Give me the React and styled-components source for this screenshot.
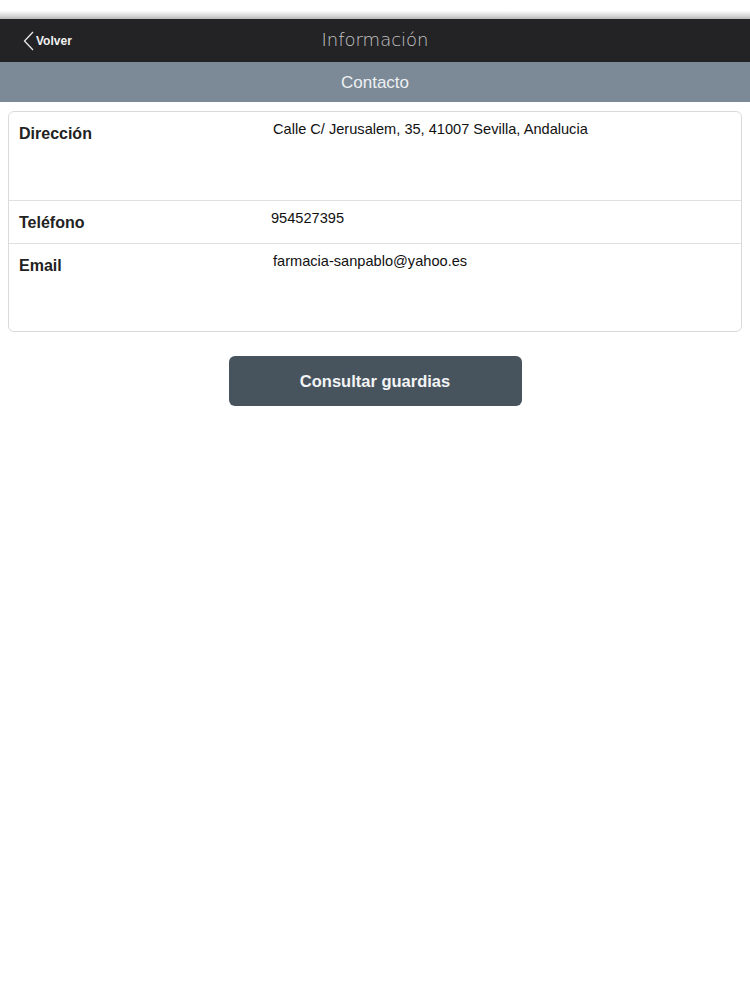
import React from "react";
import styled, { createGlobalStyle } from "styled-components";

const GlobalStyle = createGlobalStyle`
  body {
    margin: 0;
    background: #fff;
    font-family: "Liberation Sans", Arial, sans-serif;
  }
`;

const Page = styled.div`
  width: 750px;
  min-height: 1000px;
  background: #fff;
`;

const StatusStrip = styled.div`
  height: 19px;
  background: linear-gradient(#fff 0%, #fff 55%, #e4e4e4 75%, #b9b9b9 100%);
`;

const NavBar = styled.div`
  height: 43px;
  background: #232326;
  display: flex;
  align-items: center;
  justify-content: center;
  position: relative;
`;

const BackButton = styled.button`
  position: absolute;
  left: 23px;
  top: 50%;
  transform: translateY(-50%);
  display: flex;
  align-items: center;
  gap: 2px;
  background: transparent;
  border: 0;
  padding: 0;
  color: #f2f2f2;
  font-family: "Liberation Sans", Arial, sans-serif;
  font-weight: bold;
  font-size: 12px;
  cursor: pointer;
`;

const Title = styled.h1`
  margin: 0 0 2px 0;
  font-family: "DejaVu Sans", "Liberation Sans", sans-serif;
  font-weight: 200;
  font-size: 18px;
  color: #c4c4c4;
`;

const SubBar = styled.div`
  height: 40px;
  background: #7b8a96;
  display: flex;
  align-items: center;
  justify-content: center;
  padding-top: 1px;
  box-sizing: border-box;
  color: #eef1f4;
  font-size: 17px;
`;

const Content = styled.div`
  padding: 9px 8px 0 8px;
`;

const Card = styled.div`
  border: 1px solid #dadada;
  border-radius: 6px;
  background: #fff;
  overflow: hidden;
`;

const Row = styled.div`
  display: grid;
  grid-template-columns: ${(p) => p.$labelWidth}px 1fr;
  height: ${(p) => p.$height}px;
  border-top: ${(p) => (p.$first ? "none" : "1px solid #e0e0e0")};
  box-sizing: border-box;
`;

const Label = styled.div`
  padding: 13px 0 0 10px;
  font-weight: bold;
  font-size: 16px;
  color: #222;
`;

const Value = styled.div`
  padding-top: 9px;
  font-size: 14.6px;
  color: #111;
`;

const Actions = styled.div`
  display: flex;
  justify-content: center;
  padding-top: 24px;
`;

const PrimaryButton = styled.button`
  width: 293px;
  height: 50px;
  border: 0;
  border-radius: 6px;
  background: #47535d;
  color: #f2f4f6;
  font-family: "Liberation Sans", Arial, sans-serif;
  font-weight: bold;
  font-size: 16.5px;
  cursor: pointer;
`;

const rows = [
  { label: "Dirección", value: "Calle C/ Jerusalem, 35, 41007 Sevilla, Andalucia", height: 88, labelWidth: 264 },
  { label: "Teléfono", value: "954527395", height: 43, labelWidth: 262 },
  { label: "Email", value: "farmacia-sanpablo@yahoo.es", height: 88, labelWidth: 264 },
];

function ChevronLeft() {
  return (
    <svg width="11" height="20" viewBox="0 0 11 20" fill="none">
      <path d="M10 1 L1.5 10 L10 19" stroke="#e8e8e8" strokeWidth="1.3" />
    </svg>
  );
}

export default function App() {
  return (
    <Page>
      <GlobalStyle />
      <StatusStrip />
      <NavBar>
        <BackButton>
          <ChevronLeft />
          Volver
        </BackButton>
        <Title>Información</Title>
      </NavBar>
      <SubBar>Contacto</SubBar>
      <Content>
        <Card>
          {rows.map((r, i) => (
            <Row key={r.label} $first={i === 0} $height={r.height} $labelWidth={r.labelWidth}>
              <Label>{r.label}</Label>
              <Value>{r.value}</Value>
            </Row>
          ))}
        </Card>
        <Actions>
          <PrimaryButton>Consultar guardias</PrimaryButton>
        </Actions>
      </Content>
    </Page>
  );
}
